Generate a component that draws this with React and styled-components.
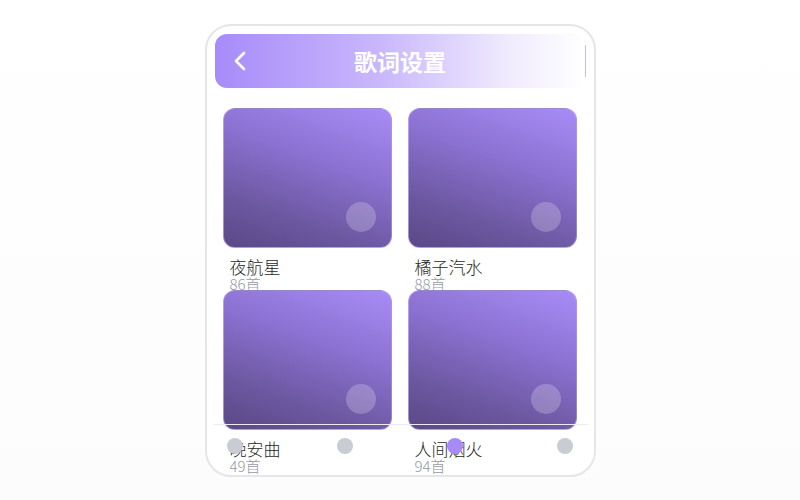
import React from "react";
import styled, { createGlobalStyle } from "styled-components";

const Global = createGlobalStyle`
  html, body { margin: 0; padding: 0; }
  body {
    height: 500px;
    background: linear-gradient(180deg, #ffffff 0%, #fcfcfc 100%);
    font-family: "Noto Sans CJK SC", "Noto Sans", sans-serif;
  }
  #root { height: 500px; }
`;

const Stage = styled.div`
  height: 500px;
  display: flex;
  align-items: center;
  justify-content: center;
`;

const Phone = styled.div`
  position: relative;
  box-sizing: border-box;
  width: 391px;
  height: 453px;
  border: 2px solid #e6e6ea;
  border-radius: 26px;
  background: #ffffff;
  padding: 8px 8px 0;
  overflow: hidden;
`;

const Header = styled.header`
  position: relative;
  box-sizing: border-box;
  height: 54px;
  border-radius: 12px;
  background: linear-gradient(90deg, #a78bfa 0%, #c9b8fc 45%, #f1ecfe 80%, #ffffff 100%);
  display: flex;
  align-items: center;
  padding: 0 0 0 18px;
`;

const BackButton = styled.button`
  width: 14px;
  height: 24px;
  padding: 0;
  border: 0;
  background: none;
  display: flex;
  align-items: center;
  justify-content: center;
  cursor: pointer;
`;

const Title = styled.h1`
  position: absolute;
  left: 0;
  right: 0;
  top: 0;
  bottom: 0;
  margin: 0;
  display: flex;
  align-items: center;
  justify-content: center;
  font-size: 23px;
  font-weight: 700;
  color: #ffffff;
  pointer-events: none;
`;

const EdgeMark = styled.span`
  margin-left: auto;
  width: 1px;
  height: 32px;
  background: #c7b9fb;
`;

const Grid = styled.div`
  display: grid;
  grid-template-columns: 169px 169px;
  grid-auto-rows: 182px;
  column-gap: 16px;
  margin: 20px 0 0 8px;
`;

const Card = styled.div`
  display: flex;
  flex-direction: column;
  min-height: 0;
`;

const Cover = styled.div`
  position: relative;
  flex-shrink: 0;
  box-sizing: border-box;
  height: 140px;
  border-radius: 12px;
  border: 1px solid rgba(196, 181, 253, 0.55);
  background: linear-gradient(200deg, #a88cf7 0%, #8a70cf 40%, #6b579f 75%, #5a4886 100%);
`;

const Disc = styled.span`
  position: absolute;
  right: 15px;
  bottom: 15px;
  width: 30px;
  height: 30px;
  border-radius: 50%;
  background: rgba(255, 255, 255, 0.22);
`;

const Name = styled.div`
  flex-shrink: 0;
  margin: 9px 0 0 7px;
  font-size: 17px;
  font-weight: 300;
  line-height: 19px;
  color: #1f1f23;
  white-space: nowrap;
`;

const Count = styled.div`
  flex-shrink: 0;
  margin-left: 7px;
  font-size: 15px;
  font-weight: 300;
  line-height: 15px;
  color: #959aa4;
  white-space: nowrap;
`;

const Nav = styled.nav`
  position: absolute;
  left: 6px;
  right: 6px;
  bottom: 0;
  height: 51px;
  box-sizing: border-box;
  border-top: 1px solid #ececf0;
  padding: 13px 14px 0;
  display: flex;
  justify-content: space-between;
  align-items: flex-start;
`;

const Dot = styled.span`
  width: 16px;
  height: 16px;
  border-radius: 50%;
  background: ${(p) => (p.$active ? "#a78bfa" : "#c9ccd2")};
`;

const albums = [
  { name: "夜航星", count: 86 },
  { name: "橘子汽水", count: 88 },
  { name: "晚安曲", count: 49 },
  { name: "人间烟火", count: 94 },
];

export default function App() {
  return (
    <>
      <Global />
      <Stage>
        <Phone>
          <Header>
            <BackButton aria-label="返回">
              <svg width="14" height="20" viewBox="0 0 14 20" fill="none">
                <polyline
                  points="11,2 3,10 11,18"
                  stroke="#ffffff"
                  strokeWidth="2.6"
                  strokeLinecap="round"
                  strokeLinejoin="round"
                />
              </svg>
            </BackButton>
            <Title>歌词设置</Title>
            <EdgeMark />
          </Header>
          <Grid>
            {albums.map((a) => (
              <Card key={a.name}>
                <Cover>
                  <Disc />
                </Cover>
                <Name>{a.name}</Name>
                <Count>{a.count}首</Count>
              </Card>
            ))}
          </Grid>
          <Nav>
            <Dot />
            <Dot />
            <Dot $active />
            <Dot />
          </Nav>
        </Phone>
      </Stage>
    </>
  );
}
